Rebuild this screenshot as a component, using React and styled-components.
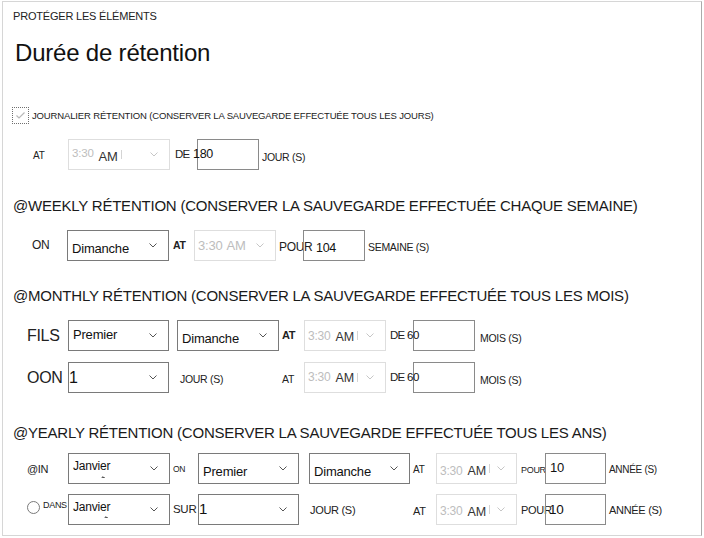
import React from "react";
import styled, { createGlobalStyle } from "styled-components";

const GlobalStyle = createGlobalStyle`
  html, body { margin: 0; padding: 0; background: #fff; }
  body { font-family: "Liberation Sans", Arial, sans-serif; color: #1f1f1f; }
  *, *::before, *::after { box-sizing: border-box; }
`;

const Frame = styled.main`
  margin: 1px 0 0 2px;
  width: 700px;
  height: 535px;
  border: 1px solid #d6d6d6;
  border-right-color: #ababab;
  display: flex;
  flex-direction: column;
`;

const Crumb = styled.div`
  margin: 8px 0 0 10px;
  font-size: 11px;
  line-height: 13px;
  letter-spacing: -0.2px;
  color: #222;
`;

const Title = styled.h1`
  margin: 16px 0 0 12px;
  font-size: 24px;
  line-height: 28px;
  font-weight: 400;
  letter-spacing: -0.2px;
  color: #111;
`;

const CheckRow = styled.label`
  display: flex;
  align-items: center;
  height: 17px;
  margin: 40px 0 0 9px;
  font-size: 9.5px;
  letter-spacing: -0.15px;
  color: #222;
`;

const CheckBox = styled.span`
  flex: none;
  width: 17px;
  height: 17px;
  margin-right: 3px;
  border: 1px dotted #707070;
  display: flex;
  align-items: center;
  justify-content: center;
`;

const Head = styled.h2`
  margin: ${(p) => p.$mt}px 0 0 10px;
  font-size: 15px;
  line-height: 18px;
  font-weight: 400;
  letter-spacing: -0.22px;
  color: #1a1a1a;
`;

const Row = styled.div`
  display: flex;
  align-items: flex-start;
  height: 31px;
  margin: ${(p) => p.$mt}px 0 0 ${(p) => p.$pl}px;
`;

const Label = styled.span`
  flex: none;
  width: ${(p) => (p.$w != null ? `${p.$w}px` : "auto")};
  margin-left: ${(p) => p.$ml || 0}px;
  padding-top: ${(p) => (p.$top - 0.13 * p.$size).toFixed(1)}px;
  font-size: ${(p) => p.$size}px;
  line-height: 1;
  font-weight: ${(p) => (p.$bold ? 700 : 400)};
  letter-spacing: ${(p) => p.$ls ?? -0.3}px;
  white-space: nowrap;
  color: #222;
`;

const SelectBox = styled.div`
  flex: none;
  position: relative;
  display: flex;
  align-items: flex-start;
  width: ${(p) => p.$w}px;
  height: 31px;
  margin-left: ${(p) => p.$ml || 0}px;
  padding-left: ${(p) => p.$pl ?? 4}px;
  border: 1px solid ${(p) => (p.$off ? "#dedede" : "#7a7a7a")};
  white-space: nowrap;
`;

const SelectValue = styled.span`
  padding-top: ${(p) => (p.$top - 1 - 0.13 * p.$size).toFixed(1)}px;
  font-size: ${(p) => p.$size}px;
  line-height: 1;
  letter-spacing: -0.2px;
  color: #111;
`;

const TimePart = styled.span`
  margin-left: ${(p) => p.$ml || 0}px;
  padding-top: ${(p) => (p.$top - 1 - 0.13 * p.$size).toFixed(1)}px;
  font-size: ${(p) => p.$size}px;
  line-height: 1;
  letter-spacing: -0.2px;
  color: ${(p) => (p.$faint ? "#bdbdbd" : "#333")};
`;

const Caret = styled.span`
  align-self: center;
  width: 1px;
  height: 9px;
  margin-left: 3px;
  background: #d4d4d4;
`;

const Chevron = styled.svg`
  flex: none;
  align-self: center;
  margin-left: auto;
  margin-right: 11px;
`;

const Tick = styled.span`
  position: absolute;
  left: ${(p) => p.$x}px;
  top: ${(p) => p.$y}px;
  width: 3px;
  height: 2px;
  border-bottom: 1px solid #555;
  border-left: 1px solid #888;
  transform: skewX(-30deg);
`;

const Field = styled.div`
  flex: none;
  width: ${(p) => p.$w}px;
  height: 31px;
  margin-left: ${(p) => p.$ml || 0}px;
  border: 1px solid #8a8a8a;
  padding-top: ${(p) => (p.$top - 1 - 0.13 * p.$size).toFixed(1)}px;
  text-indent: ${(p) => p.$indent}px;
  font-size: ${(p) => p.$size}px;
  line-height: 1;
  letter-spacing: -0.3px;
  white-space: nowrap;
  color: #111;
`;

const Radio = styled.span`
  flex: none;
  width: 13px;
  height: 13px;
  margin-top: 7px;
  border: 1px solid #7a7a7a;
  border-radius: 50%;
  background: #fff;
`;

function Arrow({ off }) {
  return (
    <Chevron width="8" height="5" viewBox="0 0 8 5">
      <polyline
        points="0.5,0.5 4,4 7.5,0.5"
        fill="none"
        stroke={off ? "#c6c6c6" : "#555"}
        strokeWidth="1"
      />
    </Chevron>
  );
}

function Select({ w, ml, pl, value, top, size = 13, tick }) {
  return (
    <SelectBox $w={w} $ml={ml} $pl={pl}>
      <SelectValue $top={top} $size={size}>
        {value}
      </SelectValue>
      {tick && <Tick $x={tick[0]} $y={tick[1]} />}
      <Arrow />
    </SelectBox>
  );
}

function TimeSelect({ w, ml, t1, t2, allFaint }) {
  return (
    <SelectBox $w={w} $ml={ml} $pl={3} $off>
      <TimePart $faint $top={t1[0]} $size={t1[1]}>
        3:30
      </TimePart>
      <TimePart $faint={allFaint} $ml={allFaint ? 4 : 5} $top={t2[0]} $size={t2[1]}>
        AM
      </TimePart>
      {!allFaint && <Caret />}
      <Arrow off />
    </SelectBox>
  );
}

export default function App() {
  return (
    <>
      <GlobalStyle />
      <Frame>
        <Crumb>PROTÉGER LES ÉLÉMENTS</Crumb>
        <Title>Durée de rétention</Title>

        <CheckRow>
          <CheckBox>
            <svg width="13" height="13" viewBox="0 0 13 13">
              <polyline
                points="2.5,6.5 5,9 10.5,3.5"
                fill="none"
                stroke="#b8b8b8"
                strokeWidth="1.2"
              />
            </svg>
          </CheckBox>
          JOURNALIER RÉTENTION (CONSERVER LA SAUVEGARDE EFFECTUÉE TOUS LES JOURS)
        </CheckRow>

        <Row $mt={15} $pl={30}>
          <Label $w={35} $top={13.3} $size={10}>AT</Label>
          <TimeSelect w={102} t1={[10.7, 11.5]} t2={[12.7, 13]} />
          <Label $w={22} $ml={5} $top={11} $size={11.5} $ls={-0.8}>DE</Label>
          <Field $w={62} $top={11} $size={12.5} $indent={-5}>180</Field>
          <Label $ml={3} $top={14} $size={10.5}>JOUR (S)</Label>
        </Row>

        <Head $mt={27}>@WEEKLY RÉTENTION (CONSERVER LA SAUVEGARDE EFFECTUÉE CHAQUE SEMAINE)</Head>

        <Row $mt={15} $pl={29}>
          <Label $w={35} $top={10.7} $size={12}>ON</Label>
          <Select w={102} value="Dimanche" top={13.3} />
          <Label $w={21} $ml={4} $top={11.7} $size={10.5} $bold>AT</Label>
          <TimeSelect w={82} t1={[11, 13]} t2={[11, 13]} allFaint />
          <Label $w={24} $ml={3} $top={12.3} $size={12}>POUR</Label>
          <Field $w={62} $top={13.3} $size={12.5} $indent={12}>104</Field>
          <Label $ml={3} $top={13.3} $size={10.5}>SEMAINE (S)</Label>
        </Row>

        <Head $mt={26}>@MONTHLY RÉTENTION (CONSERVER LA SAUVEGARDE EFFECTUÉE TOUS LES MOIS)</Head>

        <Row $mt={15} $pl={24}>
          <Label $w={41} $top={10} $size={16}>FILS</Label>
          <Select w={101} value="Premier" top={10} />
          <Select w={102} ml={8} value="Dimanche" top={13.3} />
          <Label $w={22} $ml={3} $top={11.7} $size={11} $bold>AT</Label>
          <TimeSelect w={82} t1={[11.7, 12]} t2={[12.7, 12.5]} />
          <Label $w={23} $ml={4} $top={11.7} $size={11.5} $ls={-0.8}>DE</Label>
          <Field $w={62} $top={11.7} $size={11.5} $indent={-7}>60</Field>
          <Label $ml={5} $top={14} $size={10.5}>MOIS (S)</Label>
        </Row>

        <Row $mt={11} $pl={24}>
          <Label $w={41} $top={9.7} $size={16}>OON</Label>
          <Select w={101} pl={0} value="1" top={9.7} size={16} />
          <Label $w={102} $ml={11} $top={13} $size={10.5}>JOUR (S)</Label>
          <Label $w={22} $top={13} $size={10.5}>AT</Label>
          <TimeSelect w={82} t1={[10.7, 12]} t2={[11.3, 12.5]} />
          <Label $w={23} $ml={4} $top={11.3} $size={11.5} $ls={-0.8}>DE</Label>
          <Field $w={62} $top={11.3} $size={11.5} $indent={-7}>60</Field>
          <Label $ml={5} $top={14} $size={10.5}>MOIS (S)</Label>
        </Row>

        <Head $mt={31}>@YEARLY RÉTENTION (CONSERVER LA SAUVEGARDE EFFECTUÉE TOUS LES ANS)</Head>

        <Row $mt={11} $pl={24}>
          <Label $w={41} $top={12} $size={11}>@IN</Label>
          <Select w={102} value="Janvier" top={9} size={12} tick={[33, 22]} />
          <Label $w={25} $ml={3} $top={13} $size={8.5}>ON</Label>
          <Select w={101} value="Premier" top={13.3} />
          <Select w={101} ml={10} value="Dimanche" top={13.3} />
          <Label $w={23} $ml={3} $top={13} $size={10}>AT</Label>
          <TimeSelect w={81} t1={[13.3, 12]} t2={[14, 12.5]} />
          <Label $w={24} $ml={4} $top={13.7} $size={9}>POUR</Label>
          <Field $w={61} $top={9.7} $size={13} $indent={4}>10</Field>
          <Label $ml={3} $top={13} $size={10}>ANNÉE (S)</Label>
        </Row>

        <Row $mt={10} $pl={24}>
          <Radio />
          <Label $w={25} $ml={3} $top={7.7} $size={9}>DANS</Label>
          <Select w={102} value="Janvier" top={8.4} size={12} tick={[36, 21]} />
          <Label $w={25} $ml={3} $top={11} $size={11.5}>SUR</Label>
          <Select w={101} pl={0} value="1" top={9} size={15} />
          <Label $w={103} $ml={11} $top={12.7} $size={11}>JOUR (S)</Label>
          <Label $w={23} $top={13.7} $size={11}>AT</Label>
          <TimeSelect w={81} t1={[12.4, 12]} t2={[13.4, 12.5]} />
          <Label $w={24} $ml={4} $top={12.7} $size={11}>POUR</Label>
          <Field $w={61} $top={10.3} $size={13.5} $indent={3}>10</Field>
          <Label $ml={3} $top={12.7} $size={11}>ANNÉE (S)</Label>
        </Row>
      </Frame>
    </>
  );
}
